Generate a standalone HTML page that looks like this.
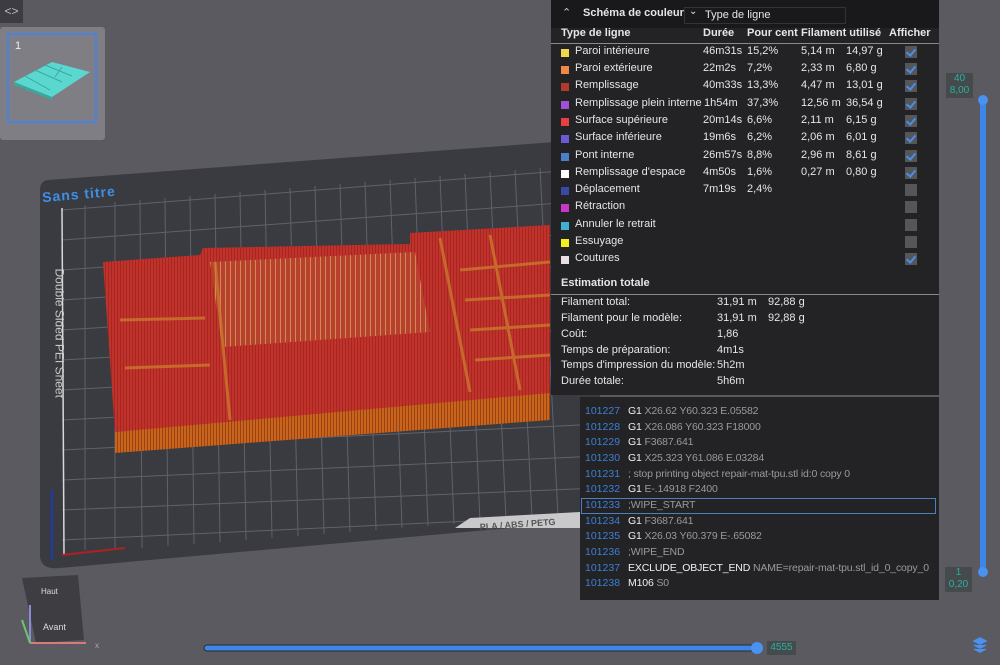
<!DOCTYPE html>
<html><head><meta charset="utf-8"><style>
*{margin:0;padding:0;box-sizing:border-box}
body{width:1000px;height:665px;overflow:hidden;background:#5a5a60;font-family:"Liberation Sans",sans-serif;position:relative;color:#e6e6e6}
.abs{position:absolute}
.panel{position:absolute;left:551px;top:0;width:388px;height:395px;background:#232326;font-size:11px}
.row{position:absolute;left:0;height:16px;white-space:nowrap}
.row span{position:absolute;top:0}
.sw{position:absolute;left:10px;top:4px;width:8px;height:8px}
.cb{position:absolute;left:354px;top:1px;width:12px;height:12px;background:#55565a}
.cb.on::after{content:"";position:absolute;left:3px;top:1px;width:4px;height:7px;border:solid #4a8ee8;border-width:0 2px 2px 0;transform:rotate(40deg)}
.gc{position:absolute;left:580px;top:397px;width:359px;height:203px;background:#232326;font-size:10.5px;letter-spacing:-0.15px}
.gl{position:absolute;left:5px;white-space:nowrap;color:#9a9a9a}
.gl b{font-weight:normal;color:#3d7fd6;display:inline-block;width:43px;letter-spacing:0}
.gl i{font-style:normal;color:#f0f0f0}
</style></head><body>
<svg class="abs" style="left:0;top:0" width="1000" height="665">
<defs>
<pattern id="rd" width="3" height="3" patternUnits="userSpaceOnUse"><rect width="3" height="3" fill="#c0332c"/><rect width="1" height="3" fill="#a8261f"/></pattern>
<pattern id="or" width="3" height="4" patternUnits="userSpaceOnUse"><rect width="3" height="4" fill="#c8641c"/><rect width="1" height="4" fill="#9a4212"/></pattern>
<pattern id="gr" width="5" height="5" patternUnits="userSpaceOnUse"><rect width="5" height="5" fill="#b8402e"/><rect width="1" height="5" fill="#d08a50"/></pattern>
</defs>
<path d="M48,180 L555,142 Q600,140 600,150 L600,520 L60,568 Q40,570 40,555 L40,190 Q40,181 48,180Z" fill="#3a3b40"/>
<g stroke="#5e626b" stroke-width="1">
<path d="M62,210L600,168M62,240L600,200M62,270L600,232M62,300L600,264M62,330L600,296M62,360L600,328M62,390L600,360M62,420L600,392M62,450L600,424M62,480L600,456M62,510L600,488M62,540L600,515"/>
<path d="M85,205V550M115,202V548M140,200L142,548M165,198L168,546M190,196L194,544M215,194L220,542M240,192L246,540M265,190L272,538M290,188L298,536M315,186L324,534M340,184L350,532M365,182L376,530M390,180L402,528M415,178L428,526M440,176L454,524M465,174L480,522M490,172L506,520M515,170L532,518M540,168L558,516"/>
</g>
<line x1="62" y1="208" x2="64" y2="555" stroke="#d8d8d8" stroke-width="1.5"/>
<polygon points="103,262 200,255 203,248 410,244 410,233 550,225 550,395 115,432" fill="url(#rd)"/>
<polygon points="210,262 415,252 430,332 222,347" fill="url(#gr)"/>
<polygon points="115,432 550,393 550,420 115,453" fill="url(#or)"/>
<path d="M120,320L205,318M125,368L210,365M215,262L230,420M440,238L470,392M490,235L520,390M460,270L550,262M465,300L550,295M470,330L550,325M475,360L550,355" stroke="#c8782c" stroke-width="3" fill="none" opacity="0.8"/>
<polygon points="455,528 470,518 580,512 580,528" fill="#c9c9cb"/>
<text x="480" y="530" font-size="9" fill="#555" font-weight="bold" transform="rotate(-4 480 530)">PLA / ABS / PETG</text>
<line x1="52" y1="560" x2="52" y2="490" stroke="#1a3ab0" stroke-width="2"/>
<line x1="62" y1="555" x2="125" y2="548" stroke="#b02020" stroke-width="2"/>
<polygon points="22,578 78,575 84,640 36,643" fill="#3e3e42"/>
<line x1="30" y1="643" x2="86" y2="643" stroke="#d87a7a" stroke-width="2"/>
<line x1="30" y1="643" x2="30" y2="605" stroke="#8a8ad8" stroke-width="2"/>
<line x1="30" y1="643" x2="22" y2="620" stroke="#6ac86a" stroke-width="2"/>
<text x="41" y="594" font-size="8" fill="#ddd">Haut</text>
<text x="43" y="630" font-size="9" fill="#ddd">Avant</text>
<text x="95" y="648" font-size="8" fill="#aaa">x</text>
<rect x="980" y="100" width="6" height="472" rx="3" fill="#3d86e8"/>
<circle cx="983" cy="100" r="5" fill="#4a92f0"/><circle cx="983" cy="572" r="5" fill="#4a92f0"/>
<rect x="204" y="645" width="555" height="6" rx="3" fill="#3d86e8" stroke="#2a2a2e" stroke-width="1"/>
<circle cx="757" cy="648" r="6" fill="#4a92f0"/>
<path d="M980,638l-6,3 6,3 6,-3z M974,645l6,3 6,-3 M974,649l6,3 6,-3" fill="#4a92f0" stroke="#4a92f0" stroke-width="1.5"/>
</svg>
<div class="abs" style="left:42px;top:186px;color:#3d8fe8;font-weight:bold;font-size:14px;transform:rotate(-5deg);letter-spacing:1px">Sans titre</div>
<div class="abs" style="left:-3px;top:324px;width:125px;color:#c8c8c8;font-size:12px;transform:rotate(90deg);text-align:center;white-space:nowrap">Double Sided PEI Sheet</div>
<div class="abs" style="left:0;top:0;width:23px;height:23px;background:#3c3c42;color:#bbb;font-size:12px;text-align:center;line-height:22px">&lt;&gt;</div>
<div class="abs" style="left:0;top:27px;width:105px;height:113px;background:#7e7e84;border-radius:3px"></div>
<div class="abs" style="left:7px;top:33px;width:90px;height:90px;border:2px solid #4a82e0;border-radius:2px"></div>
<svg class="abs" style="left:10px;top:40px" width="86" height="70"><polygon points="4,42 42,22 80,32 42,57" fill="#5ad8d0"/><polygon points="4,42 42,57 42,60 4,45" fill="#3aa8a0"/><path d="M15,36L40,50M25,30L52,42M35,25L62,36M52,27L45,37" stroke="#3aa8a0"/></svg>
<div class="abs" style="left:15px;top:40px;color:#eee;font-size:11px">1</div>

<div class="panel">
<div class="abs" style="left:0;top:0;width:388px;height:28px;background:#19191b"></div>
<div class="abs" style="left:11px;top:6px;font-size:11px;color:#ccc">&#8963;</div>
<div class="abs" style="left:32px;top:7px;font-weight:bold;font-size:11px">Schéma de couleur</div>
<div class="abs" style="left:133px;top:7px;width:162px;height:17px;background:#19191b;border:1px solid #333;font-size:11px;padding-left:20px;line-height:15px">Type de ligne</div>
<div class="abs" style="left:138px;top:6px;font-size:10px">&#8964;</div>
<div class="row" style="top:27px;font-weight:bold;width:388px"><span style="left:10px">Type de ligne</span><span style="left:152px">Durée</span><span style="left:196px">Pour cent</span><span style="left:250px">Filament utilisé</span><span style="left:338px">Afficher</span></div>
<div class="abs" style="left:0;top:43px;width:388px;height:1px;background:#8a8a8a"></div>
<div class="row" style="top:45px"><i class="sw" style="background:#f0d84a"></i><span style="left:24px">Paroi intérieure</span><span style="left:152px">46m31s</span><span style="left:196px">15,2%</span><span style="left:250px">5,14 m</span><span style="left:295px">14,97 g</span><i class="cb on"></i></div>
<div class="row" style="top:62px"><i class="sw" style="background:#f0884a"></i><span style="left:24px">Paroi extérieure</span><span style="left:152px">22m2s</span><span style="left:196px">7,2%</span><span style="left:250px">2,33 m</span><span style="left:295px">6,80 g</span><i class="cb on"></i></div>
<div class="row" style="top:79px"><i class="sw" style="background:#b03a30"></i><span style="left:24px">Remplissage</span><span style="left:152px">40m33s</span><span style="left:196px">13,3%</span><span style="left:250px">4,47 m</span><span style="left:295px">13,01 g</span><i class="cb on"></i></div>
<div class="row" style="top:97px"><i class="sw" style="background:#a050d8"></i><span style="left:24px">Remplissage plein interne</span><span style="left:153px">1h54m</span><span style="left:196px">37,3%</span><span style="left:250px">12,56 m</span><span style="left:295px">36,54 g</span><i class="cb on"></i></div>
<div class="row" style="top:114px"><i class="sw" style="background:#e84040"></i><span style="left:24px">Surface supérieure</span><span style="left:152px">20m14s</span><span style="left:196px">6,6%</span><span style="left:250px">2,11 m</span><span style="left:295px">6,15 g</span><i class="cb on"></i></div>
<div class="row" style="top:131px"><i class="sw" style="background:#6a5ad8"></i><span style="left:24px">Surface inférieure</span><span style="left:152px">19m6s</span><span style="left:196px">6,2%</span><span style="left:250px">2,06 m</span><span style="left:295px">6,01 g</span><i class="cb on"></i></div>
<div class="row" style="top:149px"><i class="sw" style="background:#4a80c8"></i><span style="left:24px">Pont interne</span><span style="left:152px">26m57s</span><span style="left:196px">8,8%</span><span style="left:250px">2,96 m</span><span style="left:295px">8,61 g</span><i class="cb on"></i></div>
<div class="row" style="top:166px"><i class="sw" style="background:#ffffff"></i><span style="left:24px">Remplissage d'espace</span><span style="left:152px">4m50s</span><span style="left:196px">1,6%</span><span style="left:250px">0,27 m</span><span style="left:295px">0,80 g</span><i class="cb on"></i></div>
<div class="row" style="top:183px"><i class="sw" style="background:#3a48a8"></i><span style="left:24px">Déplacement</span><span style="left:152px">7m19s</span><span style="left:196px">2,4%</span><i class="cb"></i></div>
<div class="row" style="top:200px"><i class="sw" style="background:#c838c8"></i><span style="left:24px">Rétraction</span><i class="cb"></i></div>
<div class="row" style="top:218px"><i class="sw" style="background:#40b0d0"></i><span style="left:24px">Annuler le retrait</span><i class="cb"></i></div>
<div class="row" style="top:235px"><i class="sw" style="background:#f0f020"></i><span style="left:24px">Essuyage</span><i class="cb"></i></div>
<div class="row" style="top:252px"><i class="sw" style="background:#e8e0e0"></i><span style="left:24px">Coutures</span><i class="cb on"></i></div>
<div class="row" style="top:277px;font-weight:bold"><span style="left:10px">Estimation totale</span></div>
<div class="abs" style="left:0;top:294px;width:388px;height:1px;background:#8a8a8a"></div>
<div class="row" style="top:296px"><span style="left:10px">Filament total:</span><span style="left:166px">31,91 m</span><span style="left:217px">92,88 g</span></div>
<div class="row" style="top:312px"><span style="left:10px">Filament pour le modèle:</span><span style="left:166px">31,91 m</span><span style="left:217px">92,88 g</span></div>
<div class="row" style="top:328px"><span style="left:10px">Coût:</span><span style="left:166px">1,86</span></div>
<div class="row" style="top:344px"><span style="left:10px">Temps de préparation:</span><span style="left:166px">4m1s</span></div>
<div class="row" style="top:359px"><span style="left:10px">Temps d'impression du modèle:</span><span style="left:166px">5h2m</span></div>
<div class="row" style="top:375px"><span style="left:10px">Durée totale:</span><span style="left:166px">5h6m</span></div>
</div>

<div class="gc">
<div class="abs" style="left:1px;top:101px;width:355px;height:16px;border:1px solid #4a7fc0"></div>
<div class="gl" style="top:8px"><b>101227</b><i>G1</i> X26.62 Y60.323 E.05582</div>
<div class="gl" style="top:24px"><b>101228</b><i>G1</i> X26.086 Y60.323 F18000</div>
<div class="gl" style="top:39px"><b>101229</b><i>G1</i> F3687.641</div>
<div class="gl" style="top:55px"><b>101230</b><i>G1</i> X25.323 Y61.086 E.03284</div>
<div class="gl" style="top:71px"><b>101231</b>; stop printing object repair-mat-tpu.stl id:0 copy 0</div>
<div class="gl" style="top:86px"><b>101232</b><i>G1</i> E-.14918 F2400</div>
<div class="gl" style="top:102px"><b>101233</b>;WIPE_START</div>
<div class="gl" style="top:118px"><b>101234</b><i>G1</i> F3687.641</div>
<div class="gl" style="top:133px"><b>101235</b><i>G1</i> X26.03 Y60.379 E-.65082</div>
<div class="gl" style="top:149px"><b>101236</b>;WIPE_END</div>
<div class="gl" style="top:165px"><b>101237</b><i>EXCLUDE_OBJECT_END</i> NAME=repair-mat-tpu.stl_id_0_copy_0</div>
<div class="gl" style="top:180px"><b>101238</b><i>M106</i> S0</div>
</div>

<div class="abs" style="left:946px;top:73px;width:27px;height:25px;background:#454a4c;color:#2ab0a0;font-size:10px;text-align:center;line-height:12px">40<br>8,00</div>
<div class="abs" style="left:945px;top:567px;width:27px;height:25px;background:#454a4c;color:#2ab0a0;font-size:10px;text-align:center;line-height:12px">1<br>0,20</div>
<div class="abs" style="left:767px;top:641px;width:29px;height:14px;background:#454a4c;color:#2ab0a0;font-size:10px;text-align:center;line-height:14px">4555</div>
</body></html>
